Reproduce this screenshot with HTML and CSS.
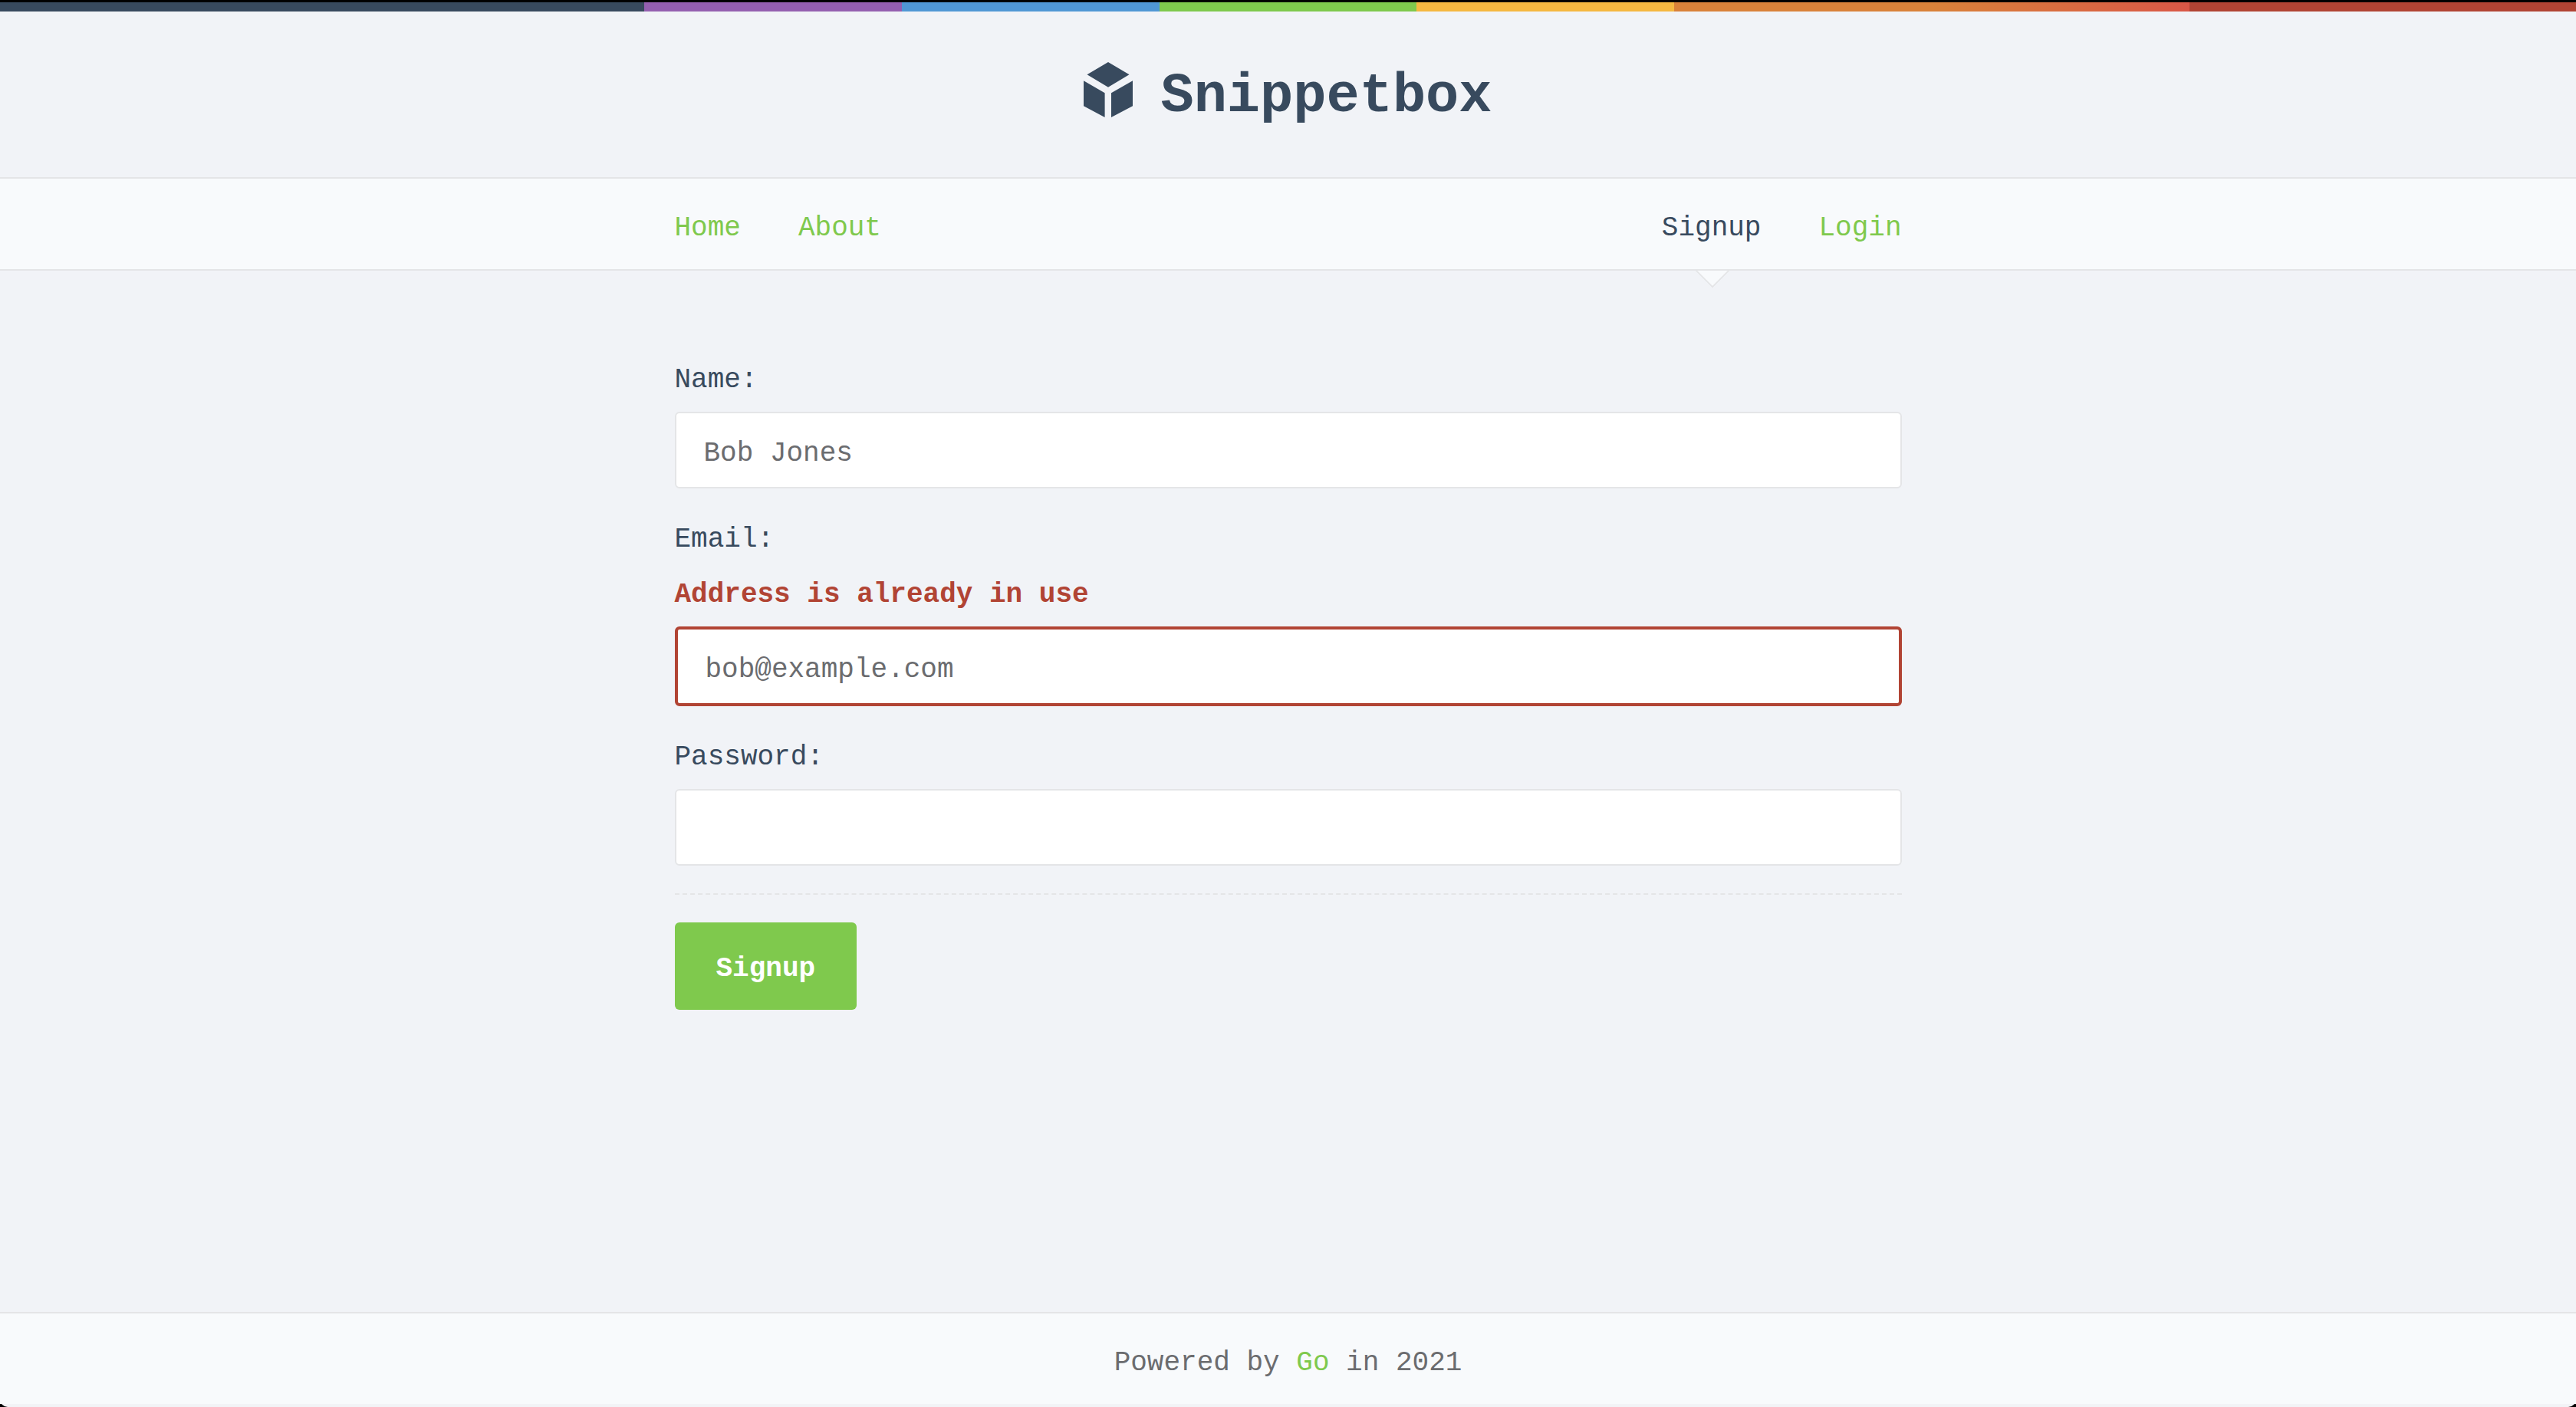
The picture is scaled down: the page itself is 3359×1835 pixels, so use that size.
FILE: index.html
```html
<!DOCTYPE html>
<html lang="en">
<head>
<meta charset="utf-8">
<title>Signup - Snippetbox</title>
<link rel="stylesheet" href="styles.css">
</head>
<body>
<div class="page">
  <header class="header">
    <h1 class="brand">
      <svg class="brand-icon" viewBox="0 0 64 72" aria-hidden="true">
        <path d="M32 0 59.5 16.2 32 32.8 4.500 16.200ZM0 24.300 27.600 40.200V72L0 57.300ZM64 24.300 36 40.200V72L64 57.300Z"/>
      </svg>
      <a class="brand-name" href="/">Snippetbox</a>
    </h1>
  </header>
  <nav class="nav">
    <div class="nav-inner">
      <div class="nav-group">
        <a class="nav-link" href="/">Home</a>
        <a class="nav-link" href="/about">About</a>
      </div>
      <div class="nav-group">
        <a class="nav-link nav-link-live" href="/user/signup">Signup</a>
        <a class="nav-link" href="/user/login">Login</a>
      </div>
    </div>
  </nav>
  <main class="main">
    <form class="form" action="/user/signup" method="post" novalidate>
      <div class="field">
        <label class="label" for="name">Name:</label>
        <input class="input" type="text" id="name" name="name" value="Bob Jones">
      </div>
      <div class="field">
        <label class="label" for="email">Email:</label>
        <p class="error" id="email-error">Address is already in use</p>
        <input class="input input-invalid" type="email" id="email" name="email" value="bob@example.com" aria-invalid="true" aria-describedby="email-error">
      </div>
      <div class="field">
        <label class="label" for="password">Password:</label>
        <input class="input" type="password" id="password" name="password">
      </div>
      <div class="actions">
        <button class="button" type="submit">Signup</button>
      </div>
    </form>
  </main>
  <footer class="footer">Powered by <a class="footer-link" href="https://golang.org/">Go</a> in 2021</footer>
</div>
</body>
</html>
```
FILE: styles.css
```css
:root {
  --navy: #384a5e;
  --green: #7fc94d;
  --red: #b14434;
  --grey: #6b6c6f;
  --line: #e4e5e7;
  --page: #f1f3f7;
  --panel: #f8fafc;
}

* {
  box-sizing: border-box;
  margin: 0;
  padding: 0;
}

html {
  background: #000;
}

body {
  font: 36px/54px "Liberation Mono", "Courier New", monospace;
  color: var(--navy);
}

a {
  color: var(--green);
  text-decoration: none;
}

.page {
  display: flex;
  flex-direction: column;
  min-height: 100vh;
  border-top: 3px solid #000;
  border-bottom: 4px solid #f2f3f6;
  border-radius: 0 0 10px 10px;
  background: var(--page);
}

/* Header with the coloured stripe along its top edge */
.header {
  padding: 78px 36px 60px;
  background: linear-gradient(to right,
    #384a5e 25%,
    #945fb0 25% 35%,
    #5097d5 35% 45%,
    #7fc94d 45% 55%,
    #f5b841 55% 65%,
    #d9823a 65% 75%,
    #d95747 85%,
    #b14434 85%) top / 100% 12px no-repeat;
}

.brand {
  display: flex;
  justify-content: center;
  align-items: flex-start;
  gap: 36px;
  font-size: 72px;
  line-height: 90px;
}

.brand-icon {
  width: 64px;
  height: 72px;
  fill: var(--navy);
}

.brand-name {
  color: var(--navy);
}

/* Navigation */
.nav {
  padding: 0 36px;
  border-top: 2px solid var(--line);
  border-bottom: 2px solid var(--line);
  background: var(--panel);
}

.nav-inner {
  display: flex;
  justify-content: space-between;
  max-width: 1600px;
  margin: 0 auto;
}

.nav-group {
  display: flex;
  gap: 75px;
}

.nav-link {
  position: relative;
  padding: 38px 0 26px;
}

.nav-link-live {
  color: var(--navy);
}

.nav-link-live::after {
  content: "";
  position: absolute;
  bottom: -18px;
  left: 50%;
  width: 30px;
  height: 30px;
  margin-left: -15px;
  border: solid var(--line);
  border-width: 0 2px 2px 0;
  background: var(--panel);
  clip-path: polygon(100% 0, 100% 100%, 0 100%);
  transform: rotate(45deg);
}

/* Form */
.main {
  flex: 1;
  padding: 116px 36px 54px;
}

.form {
  display: flex;
  flex-direction: column;
  max-width: 1600px;
  margin: 0 auto;
}

.field {
  display: flex;
  flex-direction: column;
}

.field + .field {
  margin-top: 40px;
}

.label {
  margin-bottom: 14px;
}

.error {
  margin: 4px 0 14px;
  font-weight: bold;
  color: var(--red);
}

.input {
  width: 100%;
  padding: 26px 36px 16px;
  border: 2px solid var(--line);
  border-radius: 6px;
  background: #fff;
  font: inherit;
  color: var(--grey);
}

.input-invalid {
  border: 4px solid var(--red);
}

.actions {
  margin-top: 36px;
  padding-top: 36px;
  border-top: 2px dashed var(--line);
}

.button {
  display: block;
  padding: 34px 54px 26px;
  border: 0;
  border-radius: 6px;
  background: var(--green);
  font: inherit;
  font-weight: bold;
  color: #fff;
}

/* Footer */
.footer {
  padding: 38px 36px 26px;
  border-top: 2px solid var(--line);
  background: var(--panel);
  color: var(--grey);
  text-align: center;
}
```
